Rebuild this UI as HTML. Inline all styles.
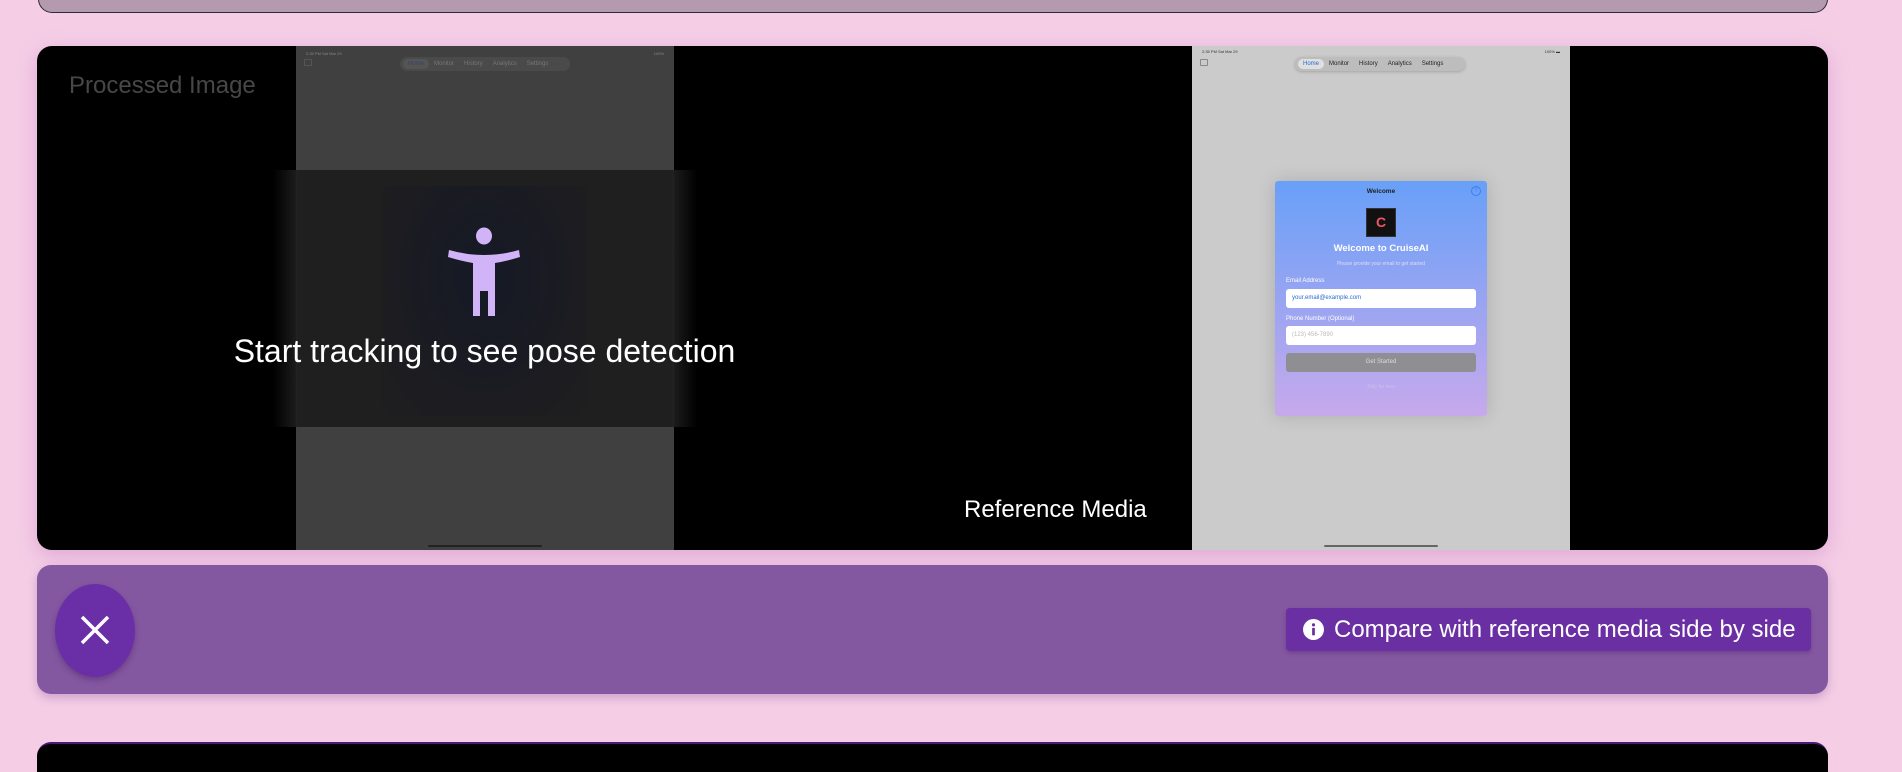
<!DOCTYPE html>
<html><head><style>
*{margin:0;padding:0;box-sizing:border-box}
body{width:1902px;height:756px;background:#f5cee6;font-family:"Liberation Sans",sans-serif;position:relative;overflow:hidden}
.abs{position:absolute}
.topbar{left:38px;top:-20px;width:1790px;height:33px;background:#b39aae;border:1.5px solid #2e2a3a;border-top:none;border-radius:0 0 14px 14px}
.card{left:37px;top:46px;width:1791px;height:504px;background:#000;border-radius:15px;overflow:hidden;box-shadow:0 6px 20px rgba(180,100,180,.35)}
.nav{display:flex;gap:0;align-items:center;border-radius:8px;font-size:6px;color:#222;padding:1px 3px}
.nav span{padding:2px 5px;border-radius:6px}
.bar{left:37px;top:565px;width:1791px;height:129px;background:#8457a1;border-radius:14px;box-shadow:0 4px 10px rgba(120,60,140,.3)}
.field{position:absolute;left:11px;width:190px;height:19px;background:#fff;border-radius:3px;font-size:6px;padding:6px 6px}
.lbl{position:absolute;left:11px;font-size:6px;color:#fff}
</style></head><body>
<div class="abs topbar"></div>
<div class="abs card">
  <div class="abs" style="left:259px;top:0;width:378px;height:504px;background:#404040">
    <div class="abs" style="left:10px;top:5px;font-size:4px;color:#888">2:35 PM Sat Mar 29</div>
    <div class="abs" style="right:10px;top:5px;font-size:4px;color:#888">100%</div>
    <div class="abs" style="left:8px;top:13px;width:8px;height:7px;border:1px solid #555;border-radius:1px"></div>
    <div class="abs nav" style="left:104px;top:11px;width:170px;height:14px;background:#4a4a4a;color:#777"><span style="background:#555;color:#346">Home</span><span>Monitor</span><span>History</span><span>Analytics</span><span>Settings</span></div>
    <div class="abs" style="left:132px;top:499px;width:114px;height:2px;background:#222;border-radius:1px"></div>
  </div>
  <div class="abs" style="left:236px;top:124px;width:424px;height:257px;background:linear-gradient(90deg,rgba(31,31,31,0) 0%,#1f1f1f 6%,#1f1f1f 94%,rgba(31,31,31,0) 100%)"></div>
  <div class="abs" style="left:345px;top:140px;width:205px;height:230px;background:radial-gradient(ellipse at 50% 40%,#151a25 0%,#1b1b22 55%,rgba(31,31,31,0) 100%)"></div>
  <div class="abs" style="left:32px;top:26px;font-size:24px;color:#474747">Processed Image</div>
  <svg class="abs" style="left:408px;top:180px" width="78" height="90" viewBox="0 0 78 90">
    <ellipse cx="39" cy="10" rx="8" ry="8.5" fill="#d1b4f7"/>
    <path d="M4 24 Q39 34 74 24 L75 31 Q62 35 50 37 L50 90 L43 90 L43 65 L35 65 L35 90 L28 90 L28 37 Q16 35 3 31 Z" fill="#d1b4f7"/>
  </svg>
  <div class="abs" style="left:0;width:895px;top:287px;text-align:center;font-size:32px;color:#fff">Start tracking to see pose detection</div>
  <div class="abs" style="left:1155px;top:0;width:378px;height:504px;background:#cbcbcb">
    <div class="abs" style="left:10px;top:3px;font-size:4px;color:#333">2:35 PM Sat Mar 29</div>
    <div class="abs" style="right:10px;top:3px;font-size:4px;color:#333">100% ▬</div>
    <div class="abs" style="left:8px;top:13px;width:8px;height:7px;border:1px solid #888;border-radius:1px"></div>
    <div class="abs nav" style="left:103px;top:11px;width:170px;height:14px;background:#bdbdbd;box-shadow:0 1px 3px rgba(0,0,0,.2)"><span style="background:#e0e0e0;color:#2a6bd0">Home</span><span>Monitor</span><span>History</span><span>Analytics</span><span>Settings</span></div>
    <div class="abs" style="left:83px;top:135px;width:212px;height:235px;border-radius:3px;background:linear-gradient(#68a0f8,#c7a9ec);box-shadow:0 0 18px rgba(0,0,0,.15)">
      <div class="abs" style="left:0;width:212px;top:7px;text-align:center;font-size:6.5px;color:#222;font-weight:bold">Welcome</div>
      <div class="abs" style="right:6px;top:5px;width:10px;height:10px;border:1px solid #3b80f0;border-radius:50%;font-size:6px;color:#3b80f0;text-align:center;line-height:8px">?</div>
      <div class="abs" style="left:91px;top:27px;width:30px;height:29px;background:#111;border:1px solid #333;color:#e56;font-weight:bold;font-size:14px;text-align:center;line-height:27px">C</div>
      <div class="abs" style="left:0;width:212px;top:62px;text-align:center;font-size:9.5px;color:#fff;font-weight:bold">Welcome to CruiseAI</div>
      <div class="abs" style="left:0;width:212px;top:80px;text-align:center;font-size:5px;color:#dde">Please provide your email to get started</div>
      <div class="lbl" style="top:97px">Email Address</div>
      <div class="field" style="top:108px;color:#2a6bd0">your.email@example.com</div>
      <div class="lbl" style="top:135px">Phone Number (Optional)</div>
      <div class="field" style="top:145px;color:#bbb">(123) 456-7890</div>
      <div class="field" style="top:172px;background:#8e8e93;color:#ddd;text-align:center">Get Started</div>
      <div class="abs" style="left:0;width:212px;top:203px;text-align:center;font-size:5px;color:#c9c0f0">Skip for now</div>
    </div>
    <div class="abs" style="left:132px;top:499px;width:114px;height:2px;background:#666;border-radius:1px"></div>
  </div>
  <div class="abs" style="left:927px;top:450px;font-size:24px;color:#fff">Reference Media</div>
</div>
<div class="abs bar">
  <div class="abs" style="left:18px;top:19px;width:80px;height:93px;border-radius:50%;background:#6a2fa6;box-shadow:0 3px 6px rgba(60,20,90,.35)">
    <svg class="abs" style="left:24px;top:30px" width="32" height="32" viewBox="0 0 32 32"><path d="M3 3 L29 29 M29 3 L3 29" stroke="#fff" stroke-width="3.5"/></svg>
  </div>
  <div class="abs" style="left:1249px;top:43px;width:525px;height:43px;background:#6a2fa2;border-radius:4px;box-shadow:0 2px 4px rgba(60,20,90,.3)">
    <svg class="abs" style="left:17px;top:11px" width="21" height="21" viewBox="0 0 20 20"><circle cx="10" cy="10" r="10" fill="#fff"/><rect x="8.7" y="8.5" width="2.6" height="7" fill="#6a2fa2"/><circle cx="10" cy="5.6" r="1.5" fill="#6a2fa2"/></svg>
    <div class="abs" style="left:48px;top:8px;font-size:24px;color:#fff;white-space:nowrap">Compare with reference media side by side</div>
  </div>
</div>
<div class="abs" style="left:37px;top:742px;width:1791px;height:30px;background:#000;border-top:2px solid #4a1a78;border-radius:14px 14px 0 0"></div>
</body></html>
